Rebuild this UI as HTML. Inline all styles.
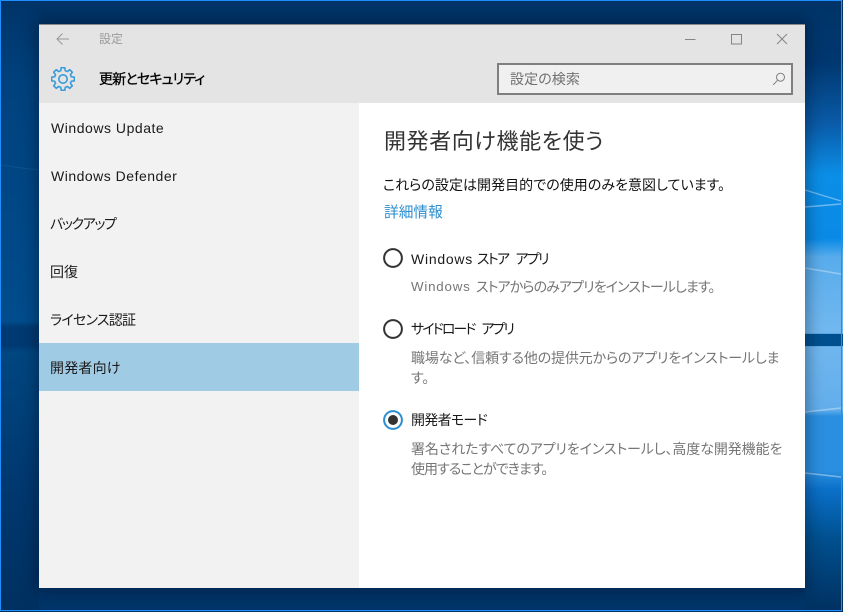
<!DOCTYPE html>
<html lang="ja"><head><meta charset="utf-8"><title>設定</title>
<style>
html,body{margin:0;padding:0;width:843px;height:612px;overflow:hidden;background:#003468}
body{position:relative;font-family:"Liberation Sans","Noto Sans CJK JP",sans-serif;font-feature-settings:"palt"}
.t{position:absolute;white-space:nowrap;line-height:20px;height:20px;font-size:14px;color:#1a1a1a}
.g{color:#767676}
#bg{position:absolute;left:0;top:0}
#fr{position:absolute;left:0;top:0;width:840px;height:609px;border:1px solid #1f8fff}
#win{position:absolute;left:39px;top:24px;width:766px;height:564px;background:#fff;box-shadow:0 0 14px 3px rgba(0,10,30,.38)}
#head{position:absolute;left:0;top:0;width:766px;height:79px;background:#e4e4e4;border-top:1px solid #8a8a8a;box-sizing:border-box}
#side{position:absolute;left:0;top:79px;width:320px;height:485px;background:#f2f2f2}
#sel{position:absolute;left:0;top:319px;width:320px;height:48px;background:#a0cbe4}
#search{position:absolute;left:458px;top:39px;width:296px;height:32px;box-sizing:border-box;background:#f0f0f0;border:2px solid #7f7f7f}
.r{position:absolute;left:383px;width:20px;height:20px}
</style></head><body>
<svg id="bg" width="843" height="612" viewBox="0 0 843 612">
<defs>
<linearGradient id="rg" x1="0" y1="0" x2="0" y2="1">
<stop offset="0" stop-color="#003468"/>
<stop offset=".1" stop-color="#00376f"/>
<stop offset=".2" stop-color="#0a5aa6"/>
<stop offset=".285" stop-color="#0b8ee6"/>
<stop offset=".39" stop-color="#0a8ae6"/>
<stop offset=".42" stop-color="#58aceb"/>
<stop offset=".545" stop-color="#72b8f0"/>
<stop offset=".546" stop-color="#00508f"/>
<stop offset=".565" stop-color="#00508f"/>
<stop offset=".566" stop-color="#6fb6ef"/>
<stop offset=".67" stop-color="#62aeeb"/>
<stop offset=".68" stop-color="#2a8fe0"/>
<stop offset=".77" stop-color="#2a8fe0"/>
<stop offset=".8" stop-color="#0a70c8"/>
<stop offset=".88" stop-color="#00508f"/>
<stop offset="1" stop-color="#003060"/>
</linearGradient>
<linearGradient id="lg" x1="0" y1="0" x2="0" y2="1">
<stop offset="0" stop-color="#003468"/>
<stop offset=".14" stop-color="#00427e"/>
<stop offset=".525" stop-color="#004c8c"/>
<stop offset=".535" stop-color="#003a72"/>
<stop offset=".565" stop-color="#003a72"/>
<stop offset=".575" stop-color="#004680"/>
<stop offset=".8" stop-color="#00386f"/>
<stop offset="1" stop-color="#003060"/>
</linearGradient>
</defs>
<rect width="843" height="612" fill="#003468"/>
<rect x="0" y="0" width="39" height="612" fill="url(#lg)"/>
<rect x="805" y="0" width="38" height="612" fill="url(#rg)"/>
<path d="M805 190L841 201M805 207L841 204M805 268L841 274M805 412L841 408M805 473L841 477" stroke="#cfe6fa" stroke-width="1.4" fill="none" opacity=".5"/>
<path d="M1 165Q20 168 38 170" stroke="#2a70b0" stroke-width="1" fill="none" opacity=".3"/>
</svg>
<div id="fr"></div>
<div id="win">
<div id="head"></div>
<div id="side"></div>
<div id="sel"></div>
<div id="search"></div>
</div>

<svg style="position:absolute;left:55px;top:31px" width="16" height="16" viewBox="0 0 16 16" fill="none" stroke="#999" stroke-width="1"><path d="M2 8H14M7.5 2.5L2 8L7.5 13.5"/></svg>
<div class="t" style="left:99px;top:29px;font-size:12px;color:#9a9a9a">設定</div>
<svg style="position:absolute;left:680px;top:30px" width="110" height="18" viewBox="0 0 110 18" fill="none" stroke="#858585" stroke-width="1"><path d="M5 9.5H15.5"/><rect x="51.5" y="4.5" width="10" height="9.5"/><path d="M97 4L107 14M107 4L97 14"/></svg>

<svg style="position:absolute;left:51px;top:67px" width="24" height="24" viewBox="-12 -12 24 24" fill="none" stroke="#3a9ad9" stroke-width="1.6" stroke-linejoin="round"><path d="M11.36 1.8L8.31 2.23L7.45 4.3L9.3 6.76L6.76 9.3L4.3 7.45L2.23 8.31L1.8 11.36L-1.8 11.36L-2.23 8.31L-4.3 7.45L-6.76 9.3L-9.3 6.76L-7.45 4.3L-8.31 2.23L-11.36 1.8L-11.36 -1.8L-8.31 -2.23L-7.45 -4.3L-9.3 -6.76L-6.76 -9.3L-4.3 -7.45L-2.23 -8.31L-1.8 -11.36L1.8 -11.36L2.23 -8.31L4.3 -7.45L6.76 -9.3L9.3 -6.76L7.45 -4.3L8.31 -2.23L11.36 -1.8Z"/><circle r="4.2"/></svg>
<div class="t" style="left:99px;top:69px;font-size:14px;color:#000;-webkit-text-stroke:.3px #000;letter-spacing:-.82px">更新とセキュリティ</div>

<div class="t g" style="left:510px;top:69px;font-size:14px;color:#707070;letter-spacing:.1px">設定の検索</div>
<svg style="position:absolute;left:772px;top:72px" width="14" height="14" viewBox="0 0 14 14" fill="none" stroke="#7f7f7f" stroke-width="1"><circle cx="8.5" cy="5.2" r="4"/><path d="M5.5 8.3L1.2 12.8"/></svg>

<div class="t" style="left:51px;top:118px;letter-spacing:.53px">Windows Update</div>
<div class="t" style="left:51px;top:166px;letter-spacing:.5px">Windows Defender</div>
<div class="t" style="left:50px;top:214px;letter-spacing:-1.35px">バックアップ</div>
<div class="t" style="left:50px;top:262px">回復</div>
<div class="t" style="left:50px;top:310px;letter-spacing:-.75px">ライセンス認証</div>
<div class="t" style="left:50px;top:358px;letter-spacing:.2px">開発者向け</div>

<div class="t" style="left:384px;top:128px;height:28px;line-height:28px;font-size:22px;color:#333;letter-spacing:.6px">開発者向け機能を使う</div>
<div class="t" style="left:383px;top:175px;font-size:14px;color:#111;letter-spacing:.04px">これらの設定は開発目的での使用のみを意図しています。</div>
<div class="t" style="left:384px;top:203px;font-size:14.7px;color:#2b8ed0">詳細情報</div>

<svg class="r" style="top:248px" viewBox="0 0 20 20" fill="none"><circle cx="10" cy="10" r="8.9" stroke="#333" stroke-width="2"/></svg>
<div class="t" style="left:411px;top:249px;letter-spacing:.75px">Windows</div>
<div class="t" style="left:477px;top:249px;letter-spacing:-1.7px;word-spacing:5px">ストア アプリ</div>
<div class="t g" style="left:411px;top:277px;font-size:13.3px;letter-spacing:.8px">Windows</div>
<div class="t g" style="left:476px;top:277px;font-size:14px;letter-spacing:-.9px">ストアからのみアプリをインストールします。</div>

<svg class="r" style="top:319px" viewBox="0 0 20 20" fill="none"><circle cx="10" cy="10" r="8.9" stroke="#333" stroke-width="2"/></svg>
<div class="t" style="left:411px;top:319px;letter-spacing:-1.95px;word-spacing:5px">サイドロード アプリ</div>
<div class="t g" style="left:411px;top:348px;font-size:14px;letter-spacing:-.15px">職場など、信頼する他の提供元からのアプリをインストールしま</div>
<div class="t g" style="left:411px;top:368px;font-size:14px">す。</div>

<svg class="r" style="top:410px" viewBox="0 0 20 20" fill="none"><circle cx="10" cy="10" r="8.9" stroke="#2b8ed0" stroke-width="2"/><circle cx="10" cy="10" r="5" fill="#333"/></svg>
<div class="t" style="left:411px;top:410px;letter-spacing:-.7px">開発者モード</div>
<div class="t g" style="left:411px;top:439px;font-size:14px;letter-spacing:-.1px">署名されたすべてのアプリをインストールし、高度な開発機能を</div>
<div class="t g" style="left:411px;top:459px;font-size:14px;letter-spacing:-.95px">使用することができます。</div>
</body></html>
